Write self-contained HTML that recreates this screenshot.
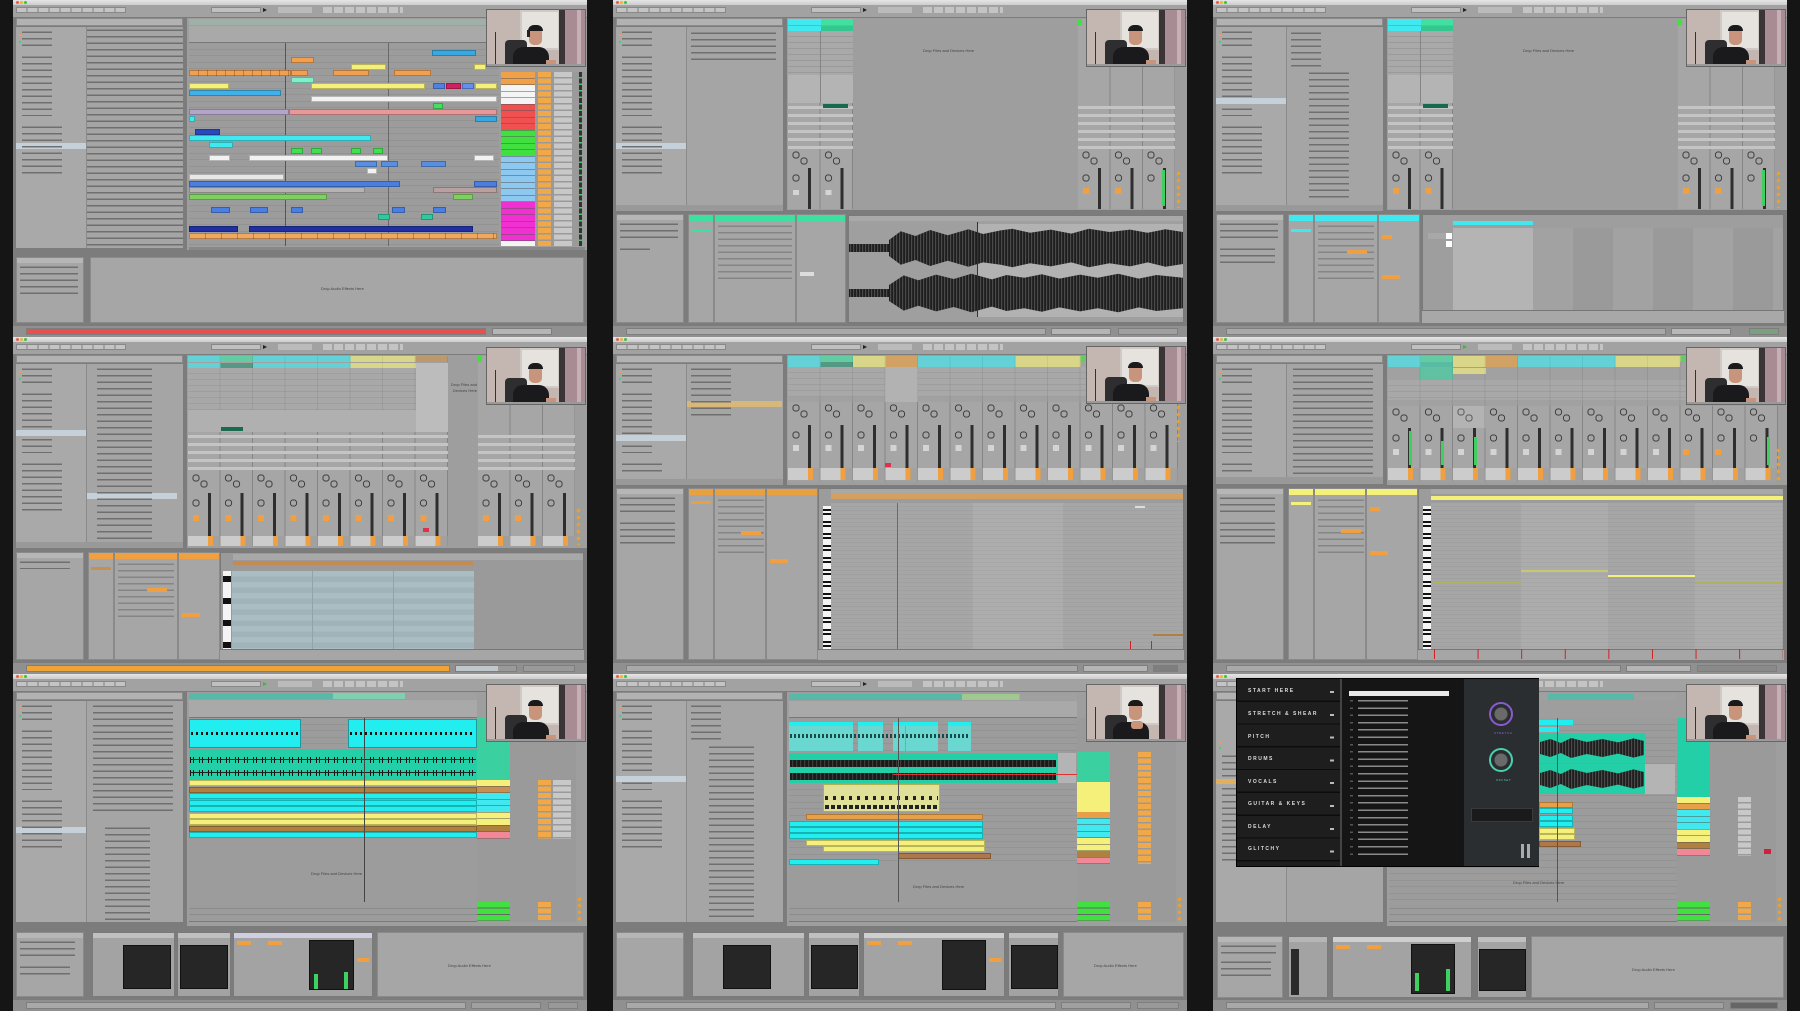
<!DOCTYPE html>
<html><head><meta charset="utf-8">
<style>
body{margin:0;background:#151515;width:1800px;height:1011px;position:relative;overflow:hidden;font-family:"Liberation Sans",sans-serif}
.p{position:absolute;width:574px;height:337px;background:#7c7c7c;overflow:hidden;font-size:4px;color:#333}
.p div{position:absolute;box-sizing:border-box}
.tt{left:0;top:0;width:574px;height:5px;background:linear-gradient(#e6e6e6,#cdcdcd)}
.l1,.l2,.l3{top:1px;width:3px;height:3px;border-radius:50%}
.l1{left:3px;background:#e85a50}.l2{left:7px;background:#e8b830}.l3{left:11px;background:#3fbf3f}
.tool{left:0;top:5px;width:574px;height:12px;background:#a2a2a2}
.tb1{left:3px;top:7px;width:110px;height:6px;background:repeating-linear-gradient(90deg,#c4c4c4 0 9px,#a2a2a2 9px 11px);border:1px solid #888}
.tb2{left:198px;top:7px;width:50px;height:6px;background:#c0c0c0;border:1px solid #888}
.tb3{left:265px;top:7px;width:34px;height:6px;background:#bbb}
.tb4{left:310px;top:7px;width:80px;height:6px;background:repeating-linear-gradient(90deg,#c4c4c4 0 9px,#a2a2a2 9px 11px)}
.play{left:250px;top:8px;width:0;height:0;border-left:4px solid #222;border-top:2.5px solid transparent;border-bottom:2.5px solid transparent}
.srch{left:3px;top:18px;width:167px;height:8px;background:#b2b2b2;border:1px solid #8a8a8a}
.cats{left:3px;top:27px;width:70px;background:#a9a9a9}
.files{left:73px;top:27px;width:97px;background:#a5a5a5;border-left:1px solid #8a8a8a}
.txt{background:repeating-linear-gradient(#0000 0 2.4px,#6f6f6f 2.4px 3.9px,#0000 3.9px 6.5px)}
.sel{background:#c5d0d8}
.od{width:2px;height:2px;background:#f0a040}
.gd{width:2px;height:2px;background:#40d080}
.main{background:#9e9e9e}
.det{background:#a6a6a6;border:1px solid #8a8a8a}
.hd{height:6px}
.stat{left:0;top:326px;width:574px;height:11px;background:#909090}
.sbar{left:13px;top:328px;height:7px;width:460px;background:#a9a9a9;border:1px solid #7e7e7e}
.sbr{left:479px;top:328px;height:7px;width:60px;background:#b5b5b5;border:1px solid #7e7e7e}
.c{height:6px;border:1px solid rgba(0,0,0,.25)}
.cam{width:100px;height:58px;background:#c4b6b0;overflow:hidden;border:1px solid #666}
.lanes{background:repeating-linear-gradient(#9c9c9c 0 6px,#8a8a8a 6px 6.5px)}
.sl{background:repeating-linear-gradient(90deg,#a6a6a6 0 31.5px,#858585 31.5px 32.5px)}
.slots{background:repeating-linear-gradient(#a9a9a9 0 5.5px,#8c8c8c 5.5px 6px)}
.sends{background:radial-gradient(circle at 8px 6px,#0000 2.6px,#444 2.6px 3.6px,#0000 3.8px),radial-gradient(circle at 16px 12px,#0000 2.6px,#444 2.6px 3.6px,#0000 3.8px),linear-gradient(90deg,#a6a6a6 31.5px,#858585 31.5px);background-size:32.5px 100%}
.fad{background:linear-gradient(90deg,#0000 20px,#2e2e2e 20px 23px,#0000 23px),radial-gradient(circle at 8px 10px,#0000 2.6px,#444 2.6px 3.6px,#0000 3.8px),linear-gradient(90deg,#a6a6a6 31.5px,#858585 31.5px);background-size:32.5px 100%}
.nbo{background:linear-gradient(90deg,#0000 5px,#f0a040 5px 11px,#0000 11px);background-size:32.5px 100%}
.nbw{background:linear-gradient(90deg,#0000 5px,#d4d4d4 5px 11px,#0000 11px);background-size:32.5px 100%}
.io{background:repeating-linear-gradient(#0000 0 3px,#c4c4c4 3px 6px,#0000 6px 8px),linear-gradient(90deg,#a6a6a6 31.5px,#858585 31.5px);background-size:32.5px 100%}
.keys{background:repeating-linear-gradient(#f4f4f4 0 3px,#111 3px 5px,#f4f4f4 5px 7px,#111 7px 9px,#f4f4f4 9px 12px)}
.roll{background:repeating-linear-gradient(#a6a6a6 0 3.5px,#9a9a9a 3.5px 4px)}
.scr{background:#262626;border:1px solid #111}
.dev{background:#a3a3a3;border:1px solid #7a7a7a}
.dh{height:5px;background:#b6b6b6}
.wv{background:repeating-linear-gradient(90deg,#1e1e1e 0 1px,#4a4a4a 1px 2px,#262626 2px 3px)}
.teal{background:#22cfa6}
.dk{color:#ddd;font-size:5px;letter-spacing:1.5px;font-weight:bold}
.li{color:#999;font-size:3px;letter-spacing:.5px}
.lbl{font-size:4px;color:#444;white-space:nowrap}
</style></head><body>

<!-- ========== PANEL 1 ========== -->
<div class="p" style="left:13px;top:0">
<div class="tt"></div><div class="l1"></div><div class="l2"></div><div class="l3"></div>
<div class="tool"></div><div class="tb1"></div><div class="tb2"></div><div class="play"></div><div class="tb3"></div><div class="tb4"></div>
<div class="srch"></div>
<div class="cats" style="height:221px"><div class="od" style="left:3px;top:7px"></div><div class="gd" style="left:3px;top:14px"></div>
<div class="txt" style="left:6px;top:2px;width:30px;height:20px"></div><div class="txt" style="left:6px;top:27px;width:30px;height:62px"></div>
<div class="sel" style="left:0;top:116px;width:70px;height:6px"></div><div class="txt" style="left:6px;top:97px;width:40px;height:52px"></div></div>
<div class="files txt" style="height:221px;background-color:#a5a5a5"></div>
<div class="main" style="left:174px;top:18px;width:400px;height:232px"></div>
<div style="left:176px;top:19px;width:310px;height:6px;background:#9fb0a8"></div>
<div style="left:176px;top:26px;width:310px;height:17px;background:#a9a9a9;border-bottom:1px solid #777"></div>
<div class="lanes" style="left:176px;top:43px;width:310px;height:203px"></div>
<div style="left:272px;top:43px;width:1px;height:203px;background:#555"></div>
<div style="left:375px;top:43px;width:1px;height:203px;background:#6a6a6a"></div>
<div class="c" style="left:419px;top:50px;width:44px;background:#3aa8e0"></div>
<div class="c" style="left:278px;top:57px;width:23px;background:#f0a050"></div>
<div class="c" style="left:338px;top:64px;width:35px;background:#f4f07a"></div><div class="c" style="left:461px;top:64px;width:12px;background:#f4f07a"></div>
<div class="c" style="left:176px;top:70px;width:102px;background:repeating-linear-gradient(90deg,#f0a050 0 8px,#c07a3a 8px 9px)"></div><div class="c" style="left:278px;top:70px;width:17px;background:#f0a050"></div><div class="c" style="left:320px;top:70px;width:36px;background:#f0a050"></div><div class="c" style="left:381px;top:70px;width:37px;background:#f0a050"></div>
<div class="c" style="left:278px;top:77px;width:23px;background:#80f0c8"></div>
<div class="c" style="left:176px;top:83px;width:40px;background:#f4f07a"></div><div class="c" style="left:298px;top:83px;width:114px;background:#f4f07a"></div><div class="c" style="left:420px;top:83px;width:12px;background:#5080e0"></div><div class="c" style="left:433px;top:83px;width:15px;background:#d02060"></div><div class="c" style="left:449px;top:83px;width:12px;background:#6090f0"></div><div class="c" style="left:462px;top:83px;width:22px;background:#f4f07a"></div>
<div class="c" style="left:176px;top:90px;width:92px;background:#40b0e8"></div>
<div class="c" style="left:298px;top:96px;width:186px;background:#f2f2f2"></div>
<div class="c" style="left:420px;top:103px;width:10px;background:#40e060"></div>
<div class="c" style="left:176px;top:109px;width:100px;background:#b4a4c8"></div><div class="c" style="left:276px;top:109px;width:208px;background:#e89898"></div>
<div class="c" style="left:176px;top:116px;width:6px;background:#40e8f0"></div><div class="c" style="left:462px;top:116px;width:22px;background:#3aa8e0"></div>
<div class="c" style="left:182px;top:129px;width:25px;background:#2848c0"></div>
<div class="c" style="left:176px;top:135px;width:182px;background:#40e8f0"></div>
<div class="c" style="left:196px;top:142px;width:24px;background:#40e8f0"></div>
<div class="c" style="left:278px;top:148px;width:12px;background:#40e050"></div><div class="c" style="left:298px;top:148px;width:11px;background:#40e050"></div><div class="c" style="left:338px;top:148px;width:10px;background:#40e050"></div><div class="c" style="left:360px;top:148px;width:10px;background:#40e050"></div>
<div class="c" style="left:196px;top:155px;width:21px;background:#f2f2f2"></div><div class="c" style="left:236px;top:155px;width:139px;background:#f2f2f2"></div><div class="c" style="left:461px;top:155px;width:20px;background:#f2f2f2"></div>
<div class="c" style="left:342px;top:161px;width:22px;background:#5a8ee0"></div><div class="c" style="left:368px;top:161px;width:17px;background:#5a8ee0"></div><div class="c" style="left:408px;top:161px;width:25px;background:#5a8ee0"></div>
<div class="c" style="left:354px;top:168px;width:10px;background:#f2f2f2"></div>
<div class="c" style="left:176px;top:174px;width:95px;background:#e8e8e8"></div>
<div class="c" style="left:176px;top:181px;width:211px;background:#4a7ee0"></div><div class="c" style="left:461px;top:181px;width:23px;background:#4a7ee0"></div>
<div class="c" style="left:176px;top:187px;width:176px;background:#b4b4b4"></div><div class="c" style="left:420px;top:187px;width:64px;background:#b8a0a0"></div>
<div class="c" style="left:176px;top:194px;width:138px;background:#7ed060"></div><div class="c" style="left:440px;top:194px;width:20px;background:#7ed060"></div>
<div class="c" style="left:198px;top:207px;width:19px;background:#4a7ee0"></div><div class="c" style="left:237px;top:207px;width:18px;background:#4a7ee0"></div><div class="c" style="left:278px;top:207px;width:12px;background:#4a7ee0"></div><div class="c" style="left:379px;top:207px;width:13px;background:#4a7ee0"></div><div class="c" style="left:420px;top:207px;width:13px;background:#4a7ee0"></div>
<div class="c" style="left:365px;top:214px;width:12px;background:#30c8a0"></div><div class="c" style="left:408px;top:214px;width:12px;background:#30c8a0"></div>
<div class="c" style="left:176px;top:226px;width:49px;background:#2030a0"></div><div class="c" style="left:236px;top:226px;width:224px;background:#2030a0"></div>
<div class="c" style="left:176px;top:233px;width:308px;background:repeating-linear-gradient(90deg,#f0a860 0 15px,#c08048 15px 16px)"></div>
<div style="left:488px;top:72px;width:34px;height:174px;background:linear-gradient(#f0a048 0 13px,#f4f4f4 13px 32.5px,#f05050 32.5px 58.5px,#40e040 58.5px 84.5px,#8cc8f0 84.5px 130px,#f030d0 130px 169px,#f4f4f4 169px);"></div>
<div style="left:488px;top:72px;width:34px;height:174px;background:repeating-linear-gradient(#0000 0 6px,#555 6px 6.5px)"></div>
<div style="left:522px;top:72px;width:50px;height:174px;background:#9a9a9a"></div>
<div style="left:525px;top:72px;width:13px;height:174px;background:repeating-linear-gradient(#f0a848 0 5px,#0000 5px 6.5px)"></div>
<div style="left:541px;top:72px;width:18px;height:174px;background:repeating-linear-gradient(#c8c8c8 0 5px,#0000 5px 6.5px)"></div>
<div style="left:566px;top:72px;width:3px;height:174px;background:repeating-linear-gradient(#333 0 5px,#40d060 5px 6.5px)"></div>
<div style="left:176px;top:247px;width:396px;height:3px;background:#888"></div>
<div class="det" style="left:3px;top:257px;width:68px;height:66px"><div class="dh" style="left:0;top:0;width:66px"></div><div class="txt" style="left:3px;top:6px;width:58px;height:33px"></div></div>
<div class="det" style="left:77px;top:257px;width:494px;height:66px"><div class="lbl" style="left:230px;top:28px">Drop Audio Effects Here</div></div>
<div class="stat"></div><div class="sbar" style="background:#e8504f"></div><div class="sbr"></div>
<div class="cam" style="left:473px;top:9px"><div style="left:33px;top:0;width:40px;height:40px;background:#e6e2de;border:2px solid #d0cac6"></div><div style="left:72px;top:0;width:6px;height:58px;background:#3a3436"></div><div style="left:78px;top:0;width:22px;height:58px;background:#a88c94"></div><div style="left:90px;top:0;width:4px;height:58px;background:#c6b0b6"></div><div style="left:8px;top:22px;width:1px;height:36px;background:#333"></div><div style="left:18px;top:30px;width:22px;height:28px;background:#2e2e30;border-radius:4px 4px 0 0"></div><div style="left:26px;top:37px;width:36px;height:22px;background:#1a1a1c;border-radius:10px 10px 0 0"></div><div style="left:42px;top:17px;width:13px;height:18px;background:#c8957c;border-radius:5px"></div><div style="left:41px;top:15px;width:15px;height:6px;background:#1a1a1a;border-radius:6px 6px 0 0"></div><div style="left:40px;top:20px;width:3px;height:7px;background:#222"></div><div style="left:59px;top:50px;width:10px;height:8px;background:#c8957c"></div><div style="left:0;top:54px;width:100px;height:4px;background:#9a9a9a"></div></div>
</div>

<!-- ========== PANEL 2 ========== -->
<div class="p" style="left:613px;top:0">
<div class="tt"></div><div class="l1"></div><div class="l2"></div><div class="l3"></div>
<div class="tool"></div><div class="tb1"></div><div class="tb2"></div><div class="play"></div><div class="tb3"></div><div class="tb4"></div>
<div class="srch"></div>
<div class="cats" style="height:178px"><div class="od" style="left:3px;top:7px"></div><div class="gd" style="left:3px;top:14px"></div>
<div class="txt" style="left:6px;top:2px;width:30px;height:20px"></div><div class="txt" style="left:6px;top:27px;width:30px;height:62px"></div>
<div class="sel" style="left:0;top:116px;width:70px;height:6px"></div><div class="txt" style="left:6px;top:97px;width:40px;height:52px"></div></div>
<div class="files" style="height:178px"><div class="txt" style="left:4px;top:3px;width:85px;height:32px"></div></div>
<div style="left:3px;top:205px;width:167px;height:6px;background:#999"></div>
<div class="main" style="left:174px;top:18px;width:400px;height:192px"></div>
<div style="left:175px;top:19px;width:33px;height:6px;background:#40e8f0"></div><div style="left:208px;top:19px;width:32px;height:6px;background:#40e0a0"></div>
<div style="left:175px;top:26px;width:33px;height:5px;background:#40e8f0"></div><div style="left:208px;top:26px;width:32px;height:5px;background:#34c890"></div>
<div class="slots" style="left:175px;top:31px;width:65px;height:44px"></div>
<div style="left:175px;top:75px;width:65px;height:28px;background:#b4b4b4"></div>
<div style="left:207px;top:31px;width:1px;height:178px;background:#858585"></div>
<div class="io" style="left:175px;top:103px;width:65px;height:46px"></div>
<div style="left:210px;top:104px;width:25px;height:4px;background:#176a50"></div>
<div class="sends" style="left:175px;top:149px;width:65px;height:19px"></div>
<div class="fad" style="left:175px;top:168px;width:65px;height:41px"></div>
<div class="nbw" style="left:175px;top:190px;width:65px;height:5px"></div>
<div class="lbl" style="left:310px;top:48px">Drop Files and Devices Here</div>
<div class="sl" style="left:465px;top:19px;width:97px;height:84px;background-color:#9e9e9e"></div>
<div style="left:465px;top:19px;width:4px;height:6px;background:#40e040"></div>
<div class="io" style="left:465px;top:103px;width:97px;height:46px"></div>
<div class="sends" style="left:465px;top:149px;width:97px;height:19px"></div>
<div class="fad" style="left:465px;top:168px;width:97px;height:41px"></div>
<div style="left:470px;top:188px;width:6px;height:6px;background:#f0a040"></div><div style="left:502px;top:188px;width:6px;height:6px;background:#f0a040"></div>
<div style="left:549px;top:170px;width:3px;height:36px;background:#40d060"></div>
<div style="left:563px;top:170px;width:5px;height:38px;background:radial-gradient(circle,#e8a030 1.6px,#0000 2px) 0 0/5px 7px"></div>
<div class="det" style="left:3px;top:214px;width:68px;height:109px"><div class="dh" style="left:0;top:0;width:66px"></div><div class="txt" style="left:3px;top:6px;width:58px;height:20px"></div><div class="txt" style="left:3px;top:31px;width:30px;height:4px"></div></div>
<div class="det" style="left:75px;top:214px;width:26px;height:109px"><div class="hd" style="left:0;top:0;width:24px;background:#3ce0a0"></div><div style="left:2px;top:14px;width:20px;height:3px;background:#3ce0a0"></div></div>
<div class="det" style="left:101px;top:214px;width:82px;height:109px"><div class="hd" style="left:0;top:0;width:80px;background:#3ce0a0"></div><div class="txt" style="left:3px;top:8px;width:74px;height:60px;opacity:.6"></div></div>
<div class="det" style="left:183px;top:214px;width:50px;height:109px"><div class="hd" style="left:0;top:0;width:48px;background:#3ce0a0"></div><div style="left:3px;top:57px;width:14px;height:4px;background:#ddd"></div></div>
<div style="left:235px;top:215px;width:336px;height:108px;background:#9f9f9f;border:1px solid #7a7a7a"></div>
<div style="left:364px;top:224px;width:206px;height:93px;background:#b2b2b2"></div>
<div style="left:236px;top:216px;width:334px;height:5px;background:#a9a9a9"></div>
<div class="wv" style="left:236px;top:244px;width:40px;height:8px"></div>
<div class="wv" style="left:276px;top:228px;width:294px;height:40px;clip-path:polygon(0 30%,4% 8%,9% 20%,14% 5%,20% 18%,27% 3%,32% 15%,38% 6%,42% 2%,48% 12%,55% 4%,62% 14%,68% 2%,75% 10%,82% 4%,88% 12%,94% 3%,100% 10%,100% 90%,94% 97%,88% 86%,82% 96%,75% 88%,68% 98%,62% 86%,55% 96%,48% 88%,42% 98%,38% 92%,32% 86%,27% 97%,20% 82%,14% 95%,9% 80%,4% 92%,0 70%)"></div>
<div class="wv" style="left:236px;top:289px;width:40px;height:8px"></div>
<div class="wv" style="left:276px;top:273px;width:294px;height:40px;clip-path:polygon(0 30%,5% 6%,10% 18%,16% 4%,22% 15%,28% 2%,35% 16%,40% 5%,46% 12%,52% 3%,58% 14%,65% 4%,71% 12%,78% 2%,85% 14%,91% 5%,100% 12%,100% 88%,91% 95%,85% 86%,78% 98%,71% 88%,65% 96%,58% 86%,52% 97%,46% 88%,40% 95%,35% 84%,28% 98%,22% 85%,16% 96%,10% 82%,5% 94%,0 70%)"></div>
<div style="left:364px;top:222px;width:1px;height:95px;background:#333"></div>
<div class="stat"></div><div class="sbar" style="width:420px"></div><div class="sbr" style="left:438px"></div><div class="sbr" style="left:505px;width:60px;background:#a0a0a0"></div>
<div class="cam" style="left:473px;top:9px"><div style="left:33px;top:0;width:40px;height:40px;background:#e6e2de;border:2px solid #d0cac6"></div><div style="left:72px;top:0;width:6px;height:58px;background:#3a3436"></div><div style="left:78px;top:0;width:22px;height:58px;background:#a88c94"></div><div style="left:90px;top:0;width:4px;height:58px;background:#c6b0b6"></div><div style="left:8px;top:22px;width:1px;height:36px;background:#333"></div><div style="left:18px;top:30px;width:22px;height:28px;background:#2e2e30;border-radius:4px 4px 0 0"></div><div style="left:26px;top:37px;width:36px;height:22px;background:#1a1a1c;border-radius:10px 10px 0 0"></div><div style="left:42px;top:17px;width:13px;height:18px;background:#c8957c;border-radius:5px"></div><div style="left:41px;top:15px;width:15px;height:6px;background:#1a1a1a;border-radius:6px 6px 0 0"></div><div style="left:59px;top:50px;width:10px;height:8px;background:#c8957c"></div><div style="left:0;top:54px;width:100px;height:4px;background:#9a9a9a"></div></div>
</div>

<!-- ========== PANEL 3 ========== -->
<div class="p" style="left:1213px;top:0">
<div class="tt"></div><div class="l1"></div><div class="l2"></div><div class="l3"></div>
<div class="tool"></div><div class="tb1"></div><div class="tb2"></div><div class="play"></div><div class="tb3"></div><div class="tb4"></div>
<div class="srch"></div>
<div class="cats" style="height:178px"><div class="od" style="left:3px;top:7px"></div><div class="gd" style="left:3px;top:14px"></div>
<div class="txt" style="left:6px;top:2px;width:30px;height:20px"></div><div class="txt" style="left:6px;top:27px;width:30px;height:62px"></div>
<div class="sel" style="left:0;top:71px;width:70px;height:6px"></div><div class="txt" style="left:6px;top:97px;width:40px;height:52px"></div></div>
<div class="files" style="height:178px"><div class="txt" style="left:4px;top:3px;width:30px;height:40px"></div><div class="txt" style="left:22px;top:43px;width:40px;height:132px"></div></div>
<div style="left:3px;top:205px;width:167px;height:6px;background:#999"></div>
<div class="main" style="left:174px;top:18px;width:400px;height:192px"></div>
<div style="left:175px;top:19px;width:33px;height:6px;background:#40e8f0"></div><div style="left:208px;top:19px;width:32px;height:6px;background:#40e0a0"></div>
<div style="left:175px;top:26px;width:33px;height:5px;background:#40e8f0"></div><div style="left:208px;top:26px;width:32px;height:5px;background:#34c890"></div>
<div class="slots" style="left:175px;top:31px;width:65px;height:44px"></div>
<div style="left:175px;top:75px;width:65px;height:28px;background:#b4b4b4"></div>
<div style="left:207px;top:31px;width:1px;height:178px;background:#858585"></div>
<div class="io" style="left:175px;top:103px;width:65px;height:46px"></div>
<div style="left:210px;top:104px;width:25px;height:4px;background:#176a50"></div>
<div class="sends" style="left:175px;top:149px;width:65px;height:19px"></div>
<div class="fad" style="left:175px;top:168px;width:65px;height:41px"></div>
<div class="nbo" style="left:175px;top:188px;width:65px;height:6px"></div>
<div class="lbl" style="left:310px;top:48px">Drop Files and Devices Here</div>
<div class="sl" style="left:465px;top:19px;width:97px;height:84px;background-color:#9e9e9e"></div>
<div style="left:465px;top:19px;width:4px;height:6px;background:#40e040"></div>
<div class="io" style="left:465px;top:103px;width:97px;height:46px"></div>
<div class="sends" style="left:465px;top:149px;width:97px;height:19px"></div>
<div class="fad" style="left:465px;top:168px;width:97px;height:41px"></div>
<div style="left:470px;top:188px;width:6px;height:6px;background:#f0a040"></div><div style="left:502px;top:188px;width:6px;height:6px;background:#f0a040"></div>
<div style="left:549px;top:170px;width:3px;height:36px;background:#40d060"></div>
<div style="left:563px;top:170px;width:5px;height:38px;background:radial-gradient(circle,#e8a030 1.6px,#0000 2px) 0 0/5px 7px"></div>
<div class="det" style="left:3px;top:214px;width:68px;height:109px"><div class="dh" style="left:0;top:0;width:66px"></div><div class="txt" style="left:3px;top:6px;width:58px;height:20px"></div><div class="txt" style="left:3px;top:31px;width:55px;height:20px"></div></div>
<div class="det" style="left:75px;top:214px;width:26px;height:109px"><div class="hd" style="left:0;top:0;width:24px;background:#40e8f0"></div><div style="left:2px;top:14px;width:20px;height:3px;background:#40e8f0"></div></div>
<div class="det" style="left:101px;top:214px;width:64px;height:109px"><div class="hd" style="left:0;top:0;width:62px;background:#40e8f0"></div><div class="txt" style="left:3px;top:8px;width:56px;height:60px;opacity:.6"></div><div style="left:32px;top:35px;width:20px;height:4px;background:#f0a040"></div></div>
<div class="det" style="left:165px;top:214px;width:42px;height:109px"><div class="hd" style="left:0;top:0;width:40px;background:#40e8f0"></div><div style="left:3px;top:20px;width:10px;height:4px;background:#f0a040"></div><div style="left:3px;top:60px;width:18px;height:4px;background:#f0a040"></div></div>
<div style="left:209px;top:214px;width:362px;height:109px;background:#9e9e9e;border:1px solid #7a7a7a"></div>
<div style="left:240px;top:228px;width:80px;height:82px;background:#b4b4b4"></div>
<div style="left:320px;top:228px;width:250px;height:82px;background:repeating-linear-gradient(90deg,#a2a2a2 0 40px,#9a9a9a 40px 80px)"></div>
<div style="left:240px;top:221px;width:80px;height:4px;background:#40e8f0"></div>
<div style="left:215px;top:233px;width:23px;height:6px;background:#a8a8a8"></div><div style="left:233px;top:233px;width:6px;height:6px;background:#fff"></div>
<div style="left:233px;top:241px;width:6px;height:6px;background:#fff"></div>
<div style="left:209px;top:310px;width:362px;height:13px;background:#a8a8a8;border-top:1px solid #777"></div>
<div class="stat"></div><div class="sbar" style="width:440px"></div><div class="sbr" style="left:458px;width:60px;background:#b8b8b8"></div><div class="sbr" style="left:536px;width:30px;background:#7aa080"></div>
<div class="cam" style="left:473px;top:9px"><div style="left:33px;top:0;width:40px;height:40px;background:#e6e2de;border:2px solid #d0cac6"></div><div style="left:72px;top:0;width:6px;height:58px;background:#3a3436"></div><div style="left:78px;top:0;width:22px;height:58px;background:#a88c94"></div><div style="left:90px;top:0;width:4px;height:58px;background:#c6b0b6"></div><div style="left:8px;top:22px;width:1px;height:36px;background:#333"></div><div style="left:18px;top:30px;width:22px;height:28px;background:#2e2e30;border-radius:4px 4px 0 0"></div><div style="left:26px;top:37px;width:36px;height:22px;background:#1a1a1c;border-radius:10px 10px 0 0"></div><div style="left:42px;top:17px;width:13px;height:18px;background:#c8957c;border-radius:5px"></div><div style="left:41px;top:15px;width:15px;height:6px;background:#1a1a1a;border-radius:6px 6px 0 0"></div><div style="left:59px;top:50px;width:10px;height:8px;background:#c8957c"></div><div style="left:0;top:54px;width:100px;height:4px;background:#9a9a9a"></div></div>
</div>

<!-- ========== PANEL 4 ========== -->
<div class="p" style="left:13px;top:337px">
<div class="tt"></div><div class="l1"></div><div class="l2"></div><div class="l3"></div>
<div class="tool"></div><div class="tb1"></div><div class="tb2"></div><div class="play"></div><div class="tb3"></div><div class="tb4"></div>
<div class="srch"></div>
<div class="cats" style="height:178px"><div class="od" style="left:3px;top:7px"></div><div class="gd" style="left:3px;top:14px"></div>
<div class="txt" style="left:6px;top:2px;width:30px;height:20px"></div><div class="txt" style="left:6px;top:27px;width:30px;height:62px"></div>
<div class="sel" style="left:0;top:66px;width:70px;height:6px"></div><div class="txt" style="left:6px;top:97px;width:40px;height:52px"></div></div>
<div class="files" style="height:178px"><div class="sel" style="left:0;top:129px;width:90px;height:6px"></div><div class="txt" style="left:10px;top:2px;width:55px;height:174px"></div></div>
<div style="left:3px;top:205px;width:167px;height:6px;background:#999"></div>
<div class="main" style="left:174px;top:18px;width:400px;height:193px"></div>
<div style="left:175px;top:19px;width:260px;height:6px;background:linear-gradient(90deg,#40e8f0 0 32.5px,#40e0a0 32.5px 65px,#40e8f0 65px 162.5px,#f4f07a 162.5px 227.5px,#c8904a 227.5px)"></div>
<div style="left:175px;top:26px;width:228px;height:5px;background:linear-gradient(90deg,#40e8f0 0 32.5px,#2a9070 32.5px 65px,#40e8f0 65px 162.5px,#f4f07a 162.5px)"></div>
<div class="slots" style="left:175px;top:31px;width:260px;height:42px"></div>
<div class="sl" style="left:175px;top:19px;width:260px;height:190px;opacity:.35"></div>
<div style="left:175px;top:73px;width:260px;height:22px;background:#b0b0b0"></div>
<div style="left:403px;top:26px;width:32px;height:70px;background:#bcbcbc"></div>
<div class="io" style="left:175px;top:95px;width:260px;height:40px"></div>
<div style="left:208px;top:90px;width:22px;height:4px;background:#1a6a50"></div>
<div class="sends" style="left:175px;top:135px;width:260px;height:21px"></div>
<div class="fad" style="left:175px;top:156px;width:260px;height:43px"></div>
<div class="nbo" style="left:175px;top:178px;width:260px;height:6px"></div>
<div style="left:410px;top:191px;width:6px;height:4px;background:#e03050"></div>
<div style="left:175px;top:199px;width:260px;height:10px;background:repeating-linear-gradient(90deg,#ccc 0 20px,#f0a040 20px 25px,#0000 25px 32.5px)"></div>
<div class="lbl" style="left:438px;top:45px">Drop Files and</div><div class="lbl" style="left:440px;top:51px">Devices Here</div>
<div class="sl" style="left:465px;top:19px;width:97px;height:76px;background-color:#9e9e9e"></div>
<div style="left:465px;top:19px;width:4px;height:6px;background:#40e040"></div>
<div class="io" style="left:465px;top:95px;width:97px;height:40px"></div>
<div class="sends" style="left:465px;top:135px;width:97px;height:21px"></div>
<div class="fad" style="left:465px;top:156px;width:97px;height:43px"></div>
<div style="left:470px;top:178px;width:6px;height:6px;background:#f0a040"></div><div style="left:502px;top:178px;width:6px;height:6px;background:#f0a040"></div>
<div style="left:465px;top:199px;width:97px;height:10px;background:repeating-linear-gradient(90deg,#ccc 0 20px,#f0a040 20px 25px,#0000 25px 32.5px)"></div>
<div style="left:563px;top:170px;width:5px;height:38px;background:radial-gradient(circle,#e8a030 1.6px,#0000 2px) 0 0/5px 7px"></div>
<div class="det" style="left:3px;top:215px;width:68px;height:108px"><div class="dh" style="left:0;top:0;width:66px"></div><div class="txt" style="left:3px;top:6px;width:50px;height:10px"></div></div>
<div class="det" style="left:75px;top:215px;width:26px;height:108px"><div class="hd" style="left:0;top:0;width:24px;background:#f0a040"></div><div style="left:2px;top:14px;width:20px;height:3px;background:#c8904a"></div></div>
<div class="det" style="left:101px;top:215px;width:64px;height:108px"><div class="hd" style="left:0;top:0;width:62px;background:#f0a040"></div><div class="txt" style="left:3px;top:8px;width:56px;height:60px;opacity:.6"></div><div style="left:32px;top:35px;width:20px;height:4px;background:#f0a040"></div></div>
<div class="det" style="left:165px;top:215px;width:42px;height:108px"><div class="hd" style="left:0;top:0;width:40px;background:#f0a040"></div><div style="left:3px;top:60px;width:18px;height:4px;background:#f0a040"></div></div>
<div style="left:207px;top:215px;width:364px;height:108px;background:#9a9a9a;border:1px solid #7a7a7a"></div>
<div style="left:220px;top:217px;width:350px;height:6px;background:#a8a8a8"></div>
<div style="left:220px;top:224px;width:240px;height:4px;background:#c48a50"></div>
<div style="left:219px;top:234px;width:242px;height:78px;background:repeating-linear-gradient(#a9bdc3 0 5.5px,#9fb3b9 5.5px 11px)"></div>
<div style="left:299px;top:234px;width:1px;height:78px;background:#90a4aa"></div><div style="left:380px;top:234px;width:1px;height:78px;background:#90a4aa"></div>
<div class="keys" style="left:210px;top:234px;width:8px;height:78px;background:repeating-linear-gradient(#f4f4f4 0 5px,#111 5px 11px,#f4f4f4 11px 16px,#f4f4f4 16px 22px)"></div>
<div style="left:207px;top:312px;width:364px;height:11px;background:#a6a6a6;border-top:1px solid #777"></div>
<div class="stat"></div><div class="sbar" style="width:424px;background:#f0a438"></div><div class="sbr" style="left:442px;width:62px;background:linear-gradient(90deg,#c0c8cc 70%,#9a9a9a 70%)"></div><div class="sbr" style="left:510px;width:52px;background:#9a9a9a"></div>
<div class="cam" style="left:473px;top:10px"><div style="left:33px;top:0;width:40px;height:40px;background:#e6e2de;border:2px solid #d0cac6"></div><div style="left:72px;top:0;width:6px;height:58px;background:#3a3436"></div><div style="left:78px;top:0;width:22px;height:58px;background:#a88c94"></div><div style="left:90px;top:0;width:4px;height:58px;background:#c6b0b6"></div><div style="left:8px;top:22px;width:1px;height:36px;background:#333"></div><div style="left:18px;top:30px;width:22px;height:28px;background:#2e2e30;border-radius:4px 4px 0 0"></div><div style="left:26px;top:37px;width:36px;height:22px;background:#1a1a1c;border-radius:10px 10px 0 0"></div><div style="left:42px;top:17px;width:13px;height:18px;background:#c8957c;border-radius:5px"></div><div style="left:41px;top:15px;width:15px;height:6px;background:#1a1a1a;border-radius:6px 6px 0 0"></div><div style="left:59px;top:50px;width:10px;height:8px;background:#c8957c"></div><div style="left:0;top:54px;width:100px;height:4px;background:#9a9a9a"></div></div>
</div>

<!-- ========== PANEL 5 ========== -->
<div class="p" style="left:613px;top:337px">
<div class="tt"></div><div class="l1"></div><div class="l2"></div><div class="l3"></div>
<div class="tool"></div><div class="tb1"></div><div class="tb2"></div><div class="play"></div><div class="tb3"></div><div class="tb4"></div>
<div class="srch"></div>
<div class="cats" style="height:115px"><div class="od" style="left:3px;top:7px"></div><div class="gd" style="left:3px;top:14px"></div>
<div class="txt" style="left:6px;top:2px;width:30px;height:20px"></div><div class="txt" style="left:6px;top:27px;width:30px;height:62px"></div>
<div class="sel" style="left:0;top:71px;width:70px;height:6px"></div><div class="txt" style="left:6px;top:97px;width:40px;height:14px"></div></div>
<div class="files" style="height:115px"><div class="sel" style="left:0;top:37px;width:95px;height:6px;background:#d8b878"></div><div class="txt" style="left:4px;top:2px;width:40px;height:52px"></div></div>
<div style="left:3px;top:142px;width:167px;height:6px;background:#999"></div>
<div class="main" style="left:174px;top:18px;width:400px;height:130px"></div>
<div style="left:175px;top:19px;width:390px;height:6px;background:linear-gradient(90deg,#40e8f0 0 32.5px,#40e0a0 32.5px 65px,#f4f07a 65px 97.5px,#e8a040 97.5px 130px,#40e8f0 130px 227.5px,#f4f07a 227.5px 292.5px,#40e040 292.5px)"></div>
<div style="left:175px;top:25px;width:390px;height:5px;background:linear-gradient(90deg,#40e8f0 0 32.5px,#2a9070 32.5px 65px,#f4f07a 65px 97.5px,#e8a040 97.5px 130px,#40e8f0 130px 227.5px,#f4f07a 227.5px 292.5px,#a0a0a0 292.5px)"></div>
<div class="slots" style="left:175px;top:30px;width:390px;height:30px"></div>
<div style="left:272px;top:30px;width:33px;height:35px;background:#b8b8b8"></div>
<div class="sl" style="left:175px;top:19px;width:390px;height:126px;opacity:.35"></div>
<div class="sends" style="left:175px;top:65px;width:390px;height:23px"></div>
<div class="fad" style="left:175px;top:88px;width:390px;height:43px"></div>
<div class="nbw" style="left:175px;top:108px;width:390px;height:6px"></div>
<div style="left:272px;top:126px;width:6px;height:4px;background:#e03050"></div>
<div style="left:175px;top:131px;width:390px;height:12px;background:repeating-linear-gradient(90deg,#ccc 0 20px,#f0a040 20px 25px,#0000 25px 32.5px)"></div>
<div style="left:563px;top:60px;width:5px;height:45px;background:radial-gradient(circle,#e8a030 1.6px,#0000 2px) 0 0/5px 7px"></div>
<div class="det" style="left:3px;top:151px;width:68px;height:172px"><div class="dh" style="left:0;top:0;width:66px"></div><div class="txt" style="left:3px;top:6px;width:55px;height:20px"></div><div class="txt" style="left:3px;top:31px;width:55px;height:27px"></div></div>
<div class="det" style="left:75px;top:151px;width:26px;height:172px"><div class="hd" style="left:0;top:0;width:24px;background:#e8a040"></div><div style="left:2px;top:12px;width:20px;height:3px;background:#e8a040"></div></div>
<div class="det" style="left:101px;top:151px;width:52px;height:172px"><div class="hd" style="left:0;top:0;width:50px;background:#e8a040"></div><div class="txt" style="left:3px;top:8px;width:46px;height:60px;opacity:.6"></div><div style="left:26px;top:42px;width:20px;height:4px;background:#f0a040"></div></div>
<div class="det" style="left:153px;top:151px;width:52px;height:172px"><div class="hd" style="left:0;top:0;width:50px;background:#e8a040"></div><div style="left:3px;top:70px;width:18px;height:4px;background:#f0a040"></div></div>
<div style="left:205px;top:151px;width:366px;height:172px;background:#9c9c9c;border:1px solid #7a7a7a"></div>
<div style="left:218px;top:152px;width:352px;height:5px;background:#a8a8a8"></div>
<div style="left:218px;top:157px;width:352px;height:5px;background:#d4a060"></div>
<div class="roll" style="left:218px;top:166px;width:352px;height:146px"></div>
<div style="left:284px;top:166px;width:1px;height:146px;background:#6a6a6a"></div>
<div style="left:360px;top:166px;width:90px;height:146px;background:rgba(255,255,255,.08)"></div>
<div class="keys" style="left:210px;top:169px;width:8px;height:143px"></div>
<div style="left:522px;top:169px;width:10px;height:2px;background:#ddd"></div>
<div style="left:540px;top:297px;width:30px;height:2px;background:#b08040"></div>
<div style="left:205px;top:312px;width:366px;height:11px;background:#a6a6a6;border-top:1px solid #777"></div>
<div style="left:517px;top:304px;width:1px;height:8px;background:#d02020"></div><div style="left:538px;top:304px;width:1px;height:8px;background:#d02020"></div>
<div class="stat"></div><div class="sbar" style="width:452px"></div><div class="sbr" style="left:470px;width:65px"></div><div class="sbr" style="left:540px;width:25px;background:#7e7e7e"></div>
<div class="cam" style="left:473px;top:9px"><div style="left:33px;top:0;width:40px;height:40px;background:#e6e2de;border:2px solid #d0cac6"></div><div style="left:72px;top:0;width:6px;height:58px;background:#3a3436"></div><div style="left:78px;top:0;width:22px;height:58px;background:#a88c94"></div><div style="left:90px;top:0;width:4px;height:58px;background:#c6b0b6"></div><div style="left:8px;top:22px;width:1px;height:36px;background:#333"></div><div style="left:18px;top:30px;width:22px;height:28px;background:#2e2e30;border-radius:4px 4px 0 0"></div><div style="left:26px;top:37px;width:36px;height:22px;background:#1a1a1c;border-radius:10px 10px 0 0"></div><div style="left:42px;top:17px;width:13px;height:18px;background:#c8957c;border-radius:5px"></div><div style="left:41px;top:15px;width:15px;height:6px;background:#1a1a1a;border-radius:6px 6px 0 0"></div><div style="left:59px;top:50px;width:10px;height:8px;background:#c8957c"></div><div style="left:0;top:54px;width:100px;height:4px;background:#9a9a9a"></div></div>
</div>

<!-- ========== PANEL 6 ========== -->
<div class="p" style="left:1213px;top:337px">
<div class="tt"></div><div class="l1"></div><div class="l2"></div><div class="l3"></div>
<div class="tool"></div><div class="tb1"></div><div class="tb2"></div><div class="play" style="border-left-color:#30c030"></div><div class="tb3"></div><div class="tb4"></div>
<div class="srch"></div>
<div class="cats" style="height:113px"><div class="od" style="left:3px;top:7px"></div><div class="gd" style="left:3px;top:14px"></div>
<div class="txt" style="left:6px;top:2px;width:30px;height:20px"></div><div class="txt" style="left:6px;top:27px;width:30px;height:62px"></div><div class="txt" style="left:6px;top:97px;width:30px;height:14px"></div></div>
<div class="files" style="height:113px"><div class="txt" style="left:6px;top:2px;width:80px;height:110px"></div></div>
<div style="left:3px;top:140px;width:167px;height:7px;background:#999"></div>
<div class="main" style="left:174px;top:18px;width:400px;height:130px"></div>
<div style="left:175px;top:19px;width:390px;height:6px;background:linear-gradient(90deg,#40e8f0 0 32.5px,#40e0a0 32.5px 65px,#f4f07a 65px 97.5px,#e8a040 97.5px 130px,#40e8f0 130px 227.5px,#f4f07a 227.5px 292.5px,#40e040 292.5px)"></div>
<div style="left:175px;top:25px;width:292px;height:5px;background:linear-gradient(90deg,#40e8f0 0 32.5px,#2fc8a0 32.5px 65px,#f4f07a 65px 97.5px,#e8a040 97.5px 130px,#40e8f0 130px 227.5px,#f4f07a 227.5px)"></div>
<div style="left:207px;top:31px;width:33px;height:12px;background:#3ad0a0"></div>
<div style="left:240px;top:31px;width:33px;height:6px;background:#f4f07a"></div>
<div class="slots" style="left:175px;top:43px;width:390px;height:20px"></div>
<div class="sl" style="left:175px;top:19px;width:390px;height:126px;opacity:.35"></div>
<div class="sends" style="left:175px;top:69px;width:390px;height:22px"></div>
<div style="left:240px;top:69px;width:33px;height:62px;background:rgba(255,255,255,.15)"></div>
<div class="fad" style="left:175px;top:91px;width:390px;height:40px"></div>
<div style="left:196px;top:94px;width:3px;height:34px;background:#40d060"></div><div style="left:228px;top:104px;width:3px;height:24px;background:#40d060"></div><div style="left:261px;top:100px;width:3px;height:28px;background:#40d060"></div><div style="left:554px;top:100px;width:3px;height:28px;background:#40d060"></div>
<div class="nbw" style="left:175px;top:112px;width:292px;height:6px"></div>
<div style="left:470px;top:112px;width:6px;height:6px;background:#f0a040"></div><div style="left:502px;top:112px;width:6px;height:6px;background:#f0a040"></div>
<div style="left:175px;top:131px;width:390px;height:12px;background:repeating-linear-gradient(90deg,#ccc 0 20px,#f0a040 20px 25px,#0000 25px 32.5px)"></div>
<div style="left:563px;top:110px;width:5px;height:36px;background:radial-gradient(circle,#e8a030 1.6px,#0000 2px) 0 0/5px 7px"></div>
<div class="det" style="left:3px;top:151px;width:68px;height:172px"><div class="dh" style="left:0;top:0;width:66px"></div><div class="txt" style="left:3px;top:6px;width:55px;height:20px"></div><div class="txt" style="left:3px;top:31px;width:55px;height:27px"></div></div>
<div class="det" style="left:75px;top:151px;width:26px;height:172px"><div class="hd" style="left:0;top:0;width:24px;background:#f4f07a"></div><div style="left:2px;top:13px;width:20px;height:3px;background:#f4f07a"></div></div>
<div class="det" style="left:101px;top:151px;width:52px;height:172px"><div class="hd" style="left:0;top:0;width:50px;background:#f4f07a"></div><div class="txt" style="left:3px;top:8px;width:46px;height:60px;opacity:.6"></div><div style="left:26px;top:40px;width:20px;height:4px;background:#f0a040"></div></div>
<div class="det" style="left:153px;top:151px;width:52px;height:172px"><div class="hd" style="left:0;top:0;width:50px;background:#f4f07a"></div><div style="left:3px;top:18px;width:10px;height:4px;background:#f0a040"></div><div style="left:3px;top:62px;width:18px;height:4px;background:#f0a040"></div></div>
<div style="left:205px;top:151px;width:366px;height:172px;background:#9c9c9c;border:1px solid #7a7a7a"></div>
<div style="left:218px;top:152px;width:352px;height:5px;background:#a8a8a8"></div>
<div style="left:218px;top:159px;width:352px;height:4px;background:#f4f07a"></div>
<div class="roll" style="left:218px;top:166px;width:352px;height:146px"></div>
<div style="left:308px;top:166px;width:87px;height:146px;background:rgba(255,255,255,.07)"></div><div style="left:482px;top:166px;width:87px;height:146px;background:rgba(255,255,255,.07)"></div>
<div class="keys" style="left:210px;top:169px;width:8px;height:143px"></div>
<div style="left:308px;top:233px;width:87px;height:2px;background:#c8c870"></div>
<div style="left:395px;top:238px;width:87px;height:2px;background:#f4f07a"></div>
<div style="left:220px;top:245px;width:88px;height:2px;background:#b0b060"></div>
<div style="left:482px;top:245px;width:88px;height:2px;background:#b0b060"></div>
<div style="left:205px;top:312px;width:366px;height:11px;background:#a6a6a6;border-top:1px solid #777"></div>
<div style="left:220px;top:312px;width:350px;height:10px;background:linear-gradient(90deg,#0000 0 1px,#d02020 1px 2px,#0000 2px) 0 0/43.6px 100%"></div>
<div class="stat"></div><div class="sbar" style="width:395px"></div><div class="sbr" style="left:413px;width:65px"></div><div class="sbr" style="left:484px;width:80px;background:#8a8a8a"></div>
<div class="cam" style="left:473px;top:10px"><div style="left:33px;top:0;width:40px;height:40px;background:#e6e2de;border:2px solid #d0cac6"></div><div style="left:72px;top:0;width:6px;height:58px;background:#3a3436"></div><div style="left:78px;top:0;width:22px;height:58px;background:#a88c94"></div><div style="left:90px;top:0;width:4px;height:58px;background:#c6b0b6"></div><div style="left:8px;top:22px;width:1px;height:36px;background:#333"></div><div style="left:18px;top:30px;width:22px;height:28px;background:#2e2e30;border-radius:4px 4px 0 0"></div><div style="left:26px;top:37px;width:36px;height:22px;background:#1a1a1c;border-radius:10px 10px 0 0"></div><div style="left:42px;top:17px;width:13px;height:18px;background:#c8957c;border-radius:5px"></div><div style="left:41px;top:15px;width:15px;height:6px;background:#1a1a1a;border-radius:6px 6px 0 0"></div><div style="left:59px;top:50px;width:10px;height:8px;background:#c8957c"></div><div style="left:0;top:54px;width:100px;height:4px;background:#9a9a9a"></div></div>
</div>

<!-- ========== PANEL 7 ========== -->
<div class="p" style="left:13px;top:674px">
<div class="tt"></div><div class="l1"></div><div class="l2"></div><div class="l3"></div>
<div class="tool"></div><div class="tb1"></div><div class="tb2"></div><div class="play" style="border-left-color:#30c030"></div><div class="tb3"></div><div class="tb4"></div>
<div class="srch"></div>
<div class="cats" style="height:221px"><div class="od" style="left:3px;top:7px"></div><div class="gd" style="left:3px;top:14px"></div>
<div class="txt" style="left:6px;top:2px;width:30px;height:20px"></div><div class="txt" style="left:6px;top:27px;width:30px;height:62px"></div>
<div class="sel" style="left:0;top:126px;width:70px;height:6px"></div><div class="txt" style="left:6px;top:97px;width:40px;height:52px"></div></div>
<div class="files" style="height:221px"><div class="txt" style="left:6px;top:2px;width:80px;height:110px"></div><div class="txt" style="left:18px;top:124px;width:45px;height:96px"></div></div>
<div class="main" style="left:174px;top:18px;width:400px;height:234px"></div>
<div style="left:176px;top:19px;width:288px;height:6px;background:linear-gradient(90deg,#5ab8a8 0 50%,#7ed0b0 50% 75%,#a0a0a0 75%)"></div>
<div style="left:176px;top:26px;width:288px;height:18px;background:#a9a9a9;border-bottom:1px solid #777"></div>
<div class="lanes" style="left:176px;top:44px;width:288px;height:184px"></div>
<div style="left:176px;top:45px;width:112px;height:29px;background:#22eef0;border:1px solid #1a9aa0"></div>
<div style="left:335px;top:45px;width:129px;height:29px;background:#22eef0;border:1px solid #1a9aa0"></div>
<div style="left:178px;top:58px;width:108px;height:3px;background:repeating-linear-gradient(90deg,#111 0 2px,#0000 2px 5px)"></div><div style="left:337px;top:58px;width:125px;height:3px;background:repeating-linear-gradient(90deg,#111 0 2px,#0000 2px 5px)"></div>
<div class="teal" style="left:176px;top:75px;width:288px;height:31px"></div>
<div style="left:177px;top:83px;width:286px;height:6px;background:repeating-linear-gradient(90deg,#111 0 1px,#0000 1px 3px,#111 3px 4px,#0000 4px 9px)"></div><div style="left:177px;top:96px;width:286px;height:6px;background:repeating-linear-gradient(90deg,#111 0 1px,#0000 1px 3px,#111 3px 4px,#0000 4px 9px)"></div>
<div style="left:177px;top:85px;width:286px;height:1px;background:#222"></div><div style="left:177px;top:98px;width:286px;height:1px;background:#222"></div>
<div class="c" style="left:176px;top:106px;width:288px;background:#f4f07a"></div>
<div class="c" style="left:176px;top:113px;width:288px;background:#b08040"></div>
<div class="c" style="left:176px;top:119px;width:288px;background:#22eef0"></div>
<div class="c" style="left:176px;top:126px;width:288px;background:#22eef0"></div>
<div class="c" style="left:176px;top:132px;width:288px;background:#22eef0"></div>
<div class="c" style="left:176px;top:139px;width:288px;background:#f4f07a"></div>
<div class="c" style="left:176px;top:145px;width:288px;background:#f4f07a"></div>
<div class="c" style="left:176px;top:152px;width:288px;background:#b08040"></div>
<div class="c" style="left:176px;top:158px;width:288px;background:#22eef0"></div>
<div style="left:176px;top:165px;width:288px;height:62px;background:#9c9c9c"></div>
<div style="left:351px;top:44px;width:1px;height:200px;background:#444"></div>
<div class="lbl" style="left:298px;top:197px">Drop Files and Devices Here</div>
<div style="left:176px;top:228px;width:288px;height:20px;background:repeating-linear-gradient(#9c9c9c 0 6px,#7a7a7a 6px 6.6px)"></div>
<div style="left:464px;top:44px;width:33px;height:200px;background:#9a9a9a"></div>
<div style="left:464px;top:44px;width:33px;height:62px;background:#3ad0a0"></div>
<div style="left:464px;top:106px;width:33px;height:59px;background:linear-gradient(#f4f07a 0 6.5px,#c89050 6.5px 13px,#40e8f0 13px 32.5px,#f4f07a 32.5px 45.5px,#b08040 45.5px 52px,#f08898 52px)"></div>
<div style="left:464px;top:106px;width:33px;height:59px;background:repeating-linear-gradient(#0000 0 6px,#555 6px 6.5px)"></div>
<div style="left:464px;top:228px;width:33px;height:19px;background:repeating-linear-gradient(#40e040 0 5.6px,#666 5.6px 6.4px)"></div>
<div style="left:497px;top:44px;width:66px;height:204px;background:#9a9a9a"></div>
<div style="left:525px;top:106px;width:13px;height:59px;background:repeating-linear-gradient(#f0a848 0 5px,#0000 5px 6.5px)"></div>
<div style="left:525px;top:228px;width:13px;height:19px;background:repeating-linear-gradient(#f0a848 0 5px,#0000 5px 6.5px)"></div>
<div style="left:540px;top:106px;width:18px;height:59px;background:repeating-linear-gradient(#c8c8c8 0 5px,#0000 5px 6.5px)"></div>
<div style="left:564px;top:222px;width:5px;height:28px;background:radial-gradient(circle,#e8a030 1.6px,#0000 2px) 0 0/5px 6.5px"></div>
<div class="det" style="left:3px;top:258px;width:68px;height:65px"><div class="dh" style="left:0;top:0;width:66px"></div><div class="txt" style="left:3px;top:6px;width:55px;height:20px"></div><div class="txt" style="left:3px;top:31px;width:50px;height:12px"></div></div>
<div class="dev" style="left:79px;top:258px;width:83px;height:65px"><div class="dh" style="left:0;top:0;width:81px;background:#c0c0c0"></div><div class="scr" style="left:30px;top:12px;width:48px;height:44px"></div></div>
<div class="dev" style="left:164px;top:258px;width:54px;height:65px"><div class="dh" style="left:0;top:0;width:52px;background:#c0c0c0"></div><div class="scr" style="left:2px;top:12px;width:48px;height:44px"></div></div>
<div class="dev" style="left:220px;top:258px;width:140px;height:65px"><div class="dh" style="left:0;top:0;width:138px;background:#cfcfe0"></div><div style="left:3px;top:8px;width:14px;height:4px;background:#f0a040"></div><div style="left:34px;top:8px;width:14px;height:4px;background:#f0a040"></div><div class="scr" style="left:75px;top:7px;width:45px;height:50px"><div style="left:4px;top:33px;width:4px;height:15px;background:#40d060"></div><div style="left:34px;top:31px;width:4px;height:17px;background:#40d060"></div></div><div style="left:123px;top:25px;width:12px;height:4px;background:#f0a040"></div></div>
<div class="det" style="left:364px;top:258px;width:207px;height:65px"><div class="lbl" style="left:70px;top:30px">Drop Audio Effects Here</div></div>
<div class="stat"></div><div class="sbar" style="width:440px"></div><div class="sbr" style="left:458px;width:70px;background:#a0a0a0"></div><div class="sbr" style="left:535px;width:30px;background:#999"></div>
<div class="cam" style="left:473px;top:10px"><div style="left:33px;top:0;width:40px;height:40px;background:#e6e2de;border:2px solid #d0cac6"></div><div style="left:72px;top:0;width:6px;height:58px;background:#3a3436"></div><div style="left:78px;top:0;width:22px;height:58px;background:#a88c94"></div><div style="left:90px;top:0;width:4px;height:58px;background:#c6b0b6"></div><div style="left:8px;top:22px;width:1px;height:36px;background:#333"></div><div style="left:18px;top:30px;width:22px;height:28px;background:#2e2e30;border-radius:4px 4px 0 0"></div><div style="left:26px;top:37px;width:36px;height:22px;background:#1a1a1c;border-radius:10px 10px 0 0"></div><div style="left:42px;top:17px;width:13px;height:18px;background:#c8957c;border-radius:5px"></div><div style="left:41px;top:15px;width:15px;height:6px;background:#1a1a1a;border-radius:6px 6px 0 0"></div><div style="left:59px;top:50px;width:10px;height:8px;background:#c8957c"></div><div style="left:0;top:54px;width:100px;height:4px;background:#9a9a9a"></div></div>
</div>

<!-- ========== PANEL 8 ========== -->
<div class="p" style="left:613px;top:674px">
<div class="tt"></div><div class="l1"></div><div class="l2"></div><div class="l3"></div>
<div class="tool"></div><div class="tb1"></div><div class="tb2"></div><div class="play"></div><div class="tb3"></div><div class="tb4"></div>
<div class="srch"></div>
<div class="cats" style="height:221px"><div class="od" style="left:3px;top:7px"></div><div class="gd" style="left:3px;top:14px"></div>
<div class="txt" style="left:6px;top:2px;width:30px;height:20px"></div><div class="txt" style="left:6px;top:27px;width:30px;height:62px"></div>
<div class="sel" style="left:0;top:75px;width:70px;height:6px"></div><div class="txt" style="left:6px;top:97px;width:40px;height:52px"></div></div>
<div class="files" style="height:221px"><div class="txt" style="left:4px;top:2px;width:30px;height:40px"></div><div class="txt" style="left:22px;top:43px;width:45px;height:176px"></div></div>
<div class="main" style="left:174px;top:18px;width:400px;height:234px"></div>
<div style="left:176px;top:20px;width:288px;height:6px;background:linear-gradient(90deg,#5ab8a8 0 60%,#a0c890 60% 80%,#a0a0a0 80%)"></div>
<div style="left:176px;top:27px;width:288px;height:17px;background:#a9a9a9;border-bottom:1px solid #777"></div>
<div class="lanes" style="left:176px;top:44px;width:288px;height:184px"></div>
<div style="left:176px;top:48px;width:64px;height:29px;background:#6ad8d0"></div><div style="left:245px;top:48px;width:25px;height:29px;background:#6ad8d0"></div><div style="left:280px;top:48px;width:12px;height:29px;background:#6ad8d0"></div><div style="left:293px;top:48px;width:32px;height:29px;background:#6ad8d0"></div><div style="left:335px;top:48px;width:23px;height:29px;background:#6ad8d0"></div>
<div style="left:176px;top:48px;width:182px;height:4px;background:linear-gradient(90deg,#22eef0 0 64px,#0000 64px 69px,#22eef0 69px 94px,#0000 94px 104px,#22eef0 104px 149px,#0000 149px 159px,#22eef0 159px)"></div>
<div style="left:177px;top:60px;width:180px;height:4px;background:repeating-linear-gradient(90deg,#1a4a48 0 2px,#0000 2px 4px)"></div>
<div class="teal" style="left:176px;top:79px;width:269px;height:30px"></div>
<div style="left:177px;top:86px;width:266px;height:7px;background:repeating-linear-gradient(90deg,#1a1a1a 0 2px,#3a3a3a 2px 3px,#222 3px 4px)"></div>
<div style="left:177px;top:99px;width:266px;height:7px;background:repeating-linear-gradient(90deg,#1a1a1a 0 2px,#3a3a3a 2px 3px,#222 3px 4px)"></div>
<div style="left:445px;top:79px;width:18px;height:30px;background:#b4b4b4"></div>
<div style="left:210px;top:110px;width:117px;height:28px;background:#e0e098;border:1px solid #b0b050"></div>
<div style="left:212px;top:122px;width:113px;height:4px;background:repeating-linear-gradient(90deg,#222 0 3px,#0000 3px 8px)"></div><div style="left:212px;top:131px;width:113px;height:4px;background:repeating-linear-gradient(90deg,#222 0 4px,#0000 4px 6px)"></div>
<div class="c" style="left:193px;top:140px;width:177px;background:#e8a048"></div>
<div class="c" style="left:176px;top:147px;width:194px;background:#22eef0"></div>
<div class="c" style="left:176px;top:153px;width:194px;background:#22eef0"></div>
<div class="c" style="left:176px;top:159px;width:194px;background:#22eef0"></div>
<div class="c" style="left:193px;top:166px;width:179px;background:#f4f07a"></div>
<div class="c" style="left:210px;top:172px;width:162px;background:#f4f07a"></div>
<div class="c" style="left:285px;top:179px;width:93px;background:#b07848"></div>
<div class="c" style="left:176px;top:185px;width:90px;background:#22eef0"></div>
<div style="left:176px;top:192px;width:288px;height:36px;background:#9c9c9c"></div>
<div style="left:285px;top:44px;width:1px;height:200px;background:#555"></div>
<div style="left:280px;top:100px;width:184px;height:1px;background:#e03030"></div>
<div class="lbl" style="left:300px;top:210px">Drop Files and Devices Here</div>
<div style="left:176px;top:228px;width:288px;height:20px;background:repeating-linear-gradient(#9c9c9c 0 6px,#7a7a7a 6px 6.6px)"></div>
<div style="left:464px;top:44px;width:33px;height:200px;background:#9a9a9a"></div>
<div style="left:464px;top:78px;width:33px;height:30px;background:#3ad0a0"></div>
<div style="left:464px;top:108px;width:33px;height:30px;background:#f4f07a"></div>
<div style="left:464px;top:138px;width:33px;height:52px;background:linear-gradient(#e8a048 0 6.5px,#40e8f0 6.5px 26px,#f4f07a 26px 39px,#b08040 39px 45.5px,#f08898 45.5px)"></div>
<div style="left:464px;top:138px;width:33px;height:52px;background:repeating-linear-gradient(#0000 0 6px,#555 6px 6.5px)"></div>
<div style="left:464px;top:228px;width:33px;height:19px;background:repeating-linear-gradient(#40e040 0 5.6px,#666 5.6px 6.4px)"></div>
<div style="left:497px;top:44px;width:66px;height:204px;background:#9a9a9a"></div>
<div style="left:525px;top:78px;width:13px;height:112px;background:repeating-linear-gradient(#f0a848 0 5px,#0000 5px 6.5px)"></div>
<div style="left:525px;top:228px;width:13px;height:19px;background:repeating-linear-gradient(#f0a848 0 5px,#0000 5px 6.5px)"></div>
<div style="left:564px;top:222px;width:5px;height:28px;background:radial-gradient(circle,#e8a030 1.6px,#0000 2px) 0 0/5px 6.5px"></div>
<div class="det" style="left:3px;top:258px;width:68px;height:65px"><div class="dh" style="left:0;top:0;width:66px"></div></div>
<div class="dev" style="left:79px;top:258px;width:113px;height:65px"><div class="dh" style="left:0;top:0;width:111px;background:#c0c0c0"></div><div class="scr" style="left:30px;top:12px;width:48px;height:44px"></div></div>
<div class="dev" style="left:195px;top:258px;width:52px;height:65px"><div class="dh" style="left:0;top:0;width:50px;background:#c0c0c0"></div><div class="scr" style="left:2px;top:12px;width:47px;height:44px"></div></div>
<div class="dev" style="left:250px;top:258px;width:142px;height:65px"><div class="dh" style="left:0;top:0;width:140px;background:#cfcfcf"></div><div style="left:3px;top:8px;width:14px;height:4px;background:#f0a040"></div><div style="left:34px;top:8px;width:14px;height:4px;background:#f0a040"></div><div class="scr" style="left:78px;top:7px;width:44px;height:50px"></div><div style="left:125px;top:25px;width:12px;height:4px;background:#f0a040"></div></div>
<div class="dev" style="left:395px;top:258px;width:51px;height:65px"><div class="dh" style="left:0;top:0;width:49px;background:#c0c0c0"></div><div class="scr" style="left:2px;top:12px;width:47px;height:44px"></div></div>
<div class="det" style="left:450px;top:258px;width:121px;height:65px"><div class="lbl" style="left:30px;top:30px">Drop Audio Effects Here</div></div>
<div class="stat"></div><div class="sbar" style="width:430px"></div><div class="sbr" style="left:448px;width:70px;background:#a0a0a0"></div><div class="sbr" style="left:524px;width:42px;background:#999"></div>
<div class="cam" style="left:473px;top:10px"><div style="left:33px;top:0;width:40px;height:40px;background:#e6e2de;border:2px solid #d0cac6"></div><div style="left:72px;top:0;width:6px;height:58px;background:#3a3436"></div><div style="left:78px;top:0;width:22px;height:58px;background:#a88c94"></div><div style="left:90px;top:0;width:4px;height:58px;background:#c6b0b6"></div><div style="left:8px;top:22px;width:1px;height:36px;background:#333"></div><div style="left:18px;top:30px;width:22px;height:28px;background:#2e2e30;border-radius:4px 4px 0 0"></div><div style="left:26px;top:37px;width:36px;height:22px;background:#1a1a1c;border-radius:10px 10px 0 0"></div><div style="left:42px;top:17px;width:13px;height:18px;background:#c8957c;border-radius:5px"></div><div style="left:41px;top:15px;width:15px;height:6px;background:#1a1a1a;border-radius:6px 6px 0 0"></div><div style="left:44px;top:36px;width:12px;height:8px;background:#c8957c;border-radius:3px"></div><div style="left:0;top:54px;width:100px;height:4px;background:#9a9a9a"></div></div>
</div>

<!-- ========== PANEL 9 ========== -->
<div class="p" style="left:1213px;top:674px">
<div class="tt"></div><div class="l1"></div><div class="l2"></div><div class="l3"></div>
<div class="tool"></div><div class="tb1"></div><div class="tb2"></div><div class="play"></div><div class="tb3"></div><div class="tb4"></div>
<div class="srch"></div>
<div class="cats" style="height:221px"><div class="od" style="left:3px;top:40px"></div><div class="gd" style="left:3px;top:46px"></div><div class="txt" style="left:6px;top:52px;width:30px;height:60px"></div>
<div class="sel" style="left:0;top:78px;width:70px;height:5px;background:#e0b060"></div><div class="txt" style="left:6px;top:110px;width:40px;height:52px"></div></div>
<div class="files" style="height:221px"></div>
<div class="main" style="left:174px;top:18px;width:400px;height:234px"></div>
<div class="lanes" style="left:176px;top:44px;width:288px;height:184px"></div>
<div style="left:176px;top:20px;width:288px;height:6px;background:linear-gradient(90deg,#a0a0a0 0 55%,#5ab8a8 55% 85%,#a0a0a0 85%)"></div>
<div style="left:326px;top:46px;width:34px;height:5px;background:#22eef0"></div>
<div style="left:326px;top:53px;width:20px;height:5px;background:#22eef0"></div>
<div class="teal" style="left:326px;top:59px;width:106px;height:30px"></div>
<div class="teal" style="left:326px;top:90px;width:106px;height:30px"></div>
<div style="left:432px;top:90px;width:30px;height:30px;background:#b4b4b4"></div>
<div class="wv" style="left:327px;top:64px;width:104px;height:20px;clip-path:polygon(0 20%,10% 5%,20% 25%,30% 0,45% 20%,60% 5%,75% 22%,90% 2%,100% 15%,100% 85%,90% 98%,75% 78%,60% 95%,45% 80%,30% 100%,20% 75%,10% 95%,0 80%)"></div>
<div class="wv" style="left:327px;top:95px;width:104px;height:20px;clip-path:polygon(0 20%,10% 5%,20% 25%,30% 0,45% 20%,60% 5%,75% 22%,90% 2%,100% 15%,100% 85%,90% 98%,75% 78%,60% 95%,45% 80%,30% 100%,20% 75%,10% 95%,0 80%)"></div>
<div class="c" style="left:326px;top:128px;width:34px;background:#e8a048"></div>
<div class="c" style="left:326px;top:134px;width:34px;background:#22eef0"></div><div class="c" style="left:326px;top:141px;width:34px;background:#22eef0"></div><div class="c" style="left:326px;top:147px;width:34px;background:#22eef0"></div>
<div class="c" style="left:326px;top:154px;width:36px;background:#f4f07a"></div><div class="c" style="left:326px;top:160px;width:36px;background:#f4f07a"></div>
<div class="c" style="left:326px;top:167px;width:42px;background:#b07848"></div>
<div style="left:344px;top:44px;width:1px;height:200px;background:#555"></div>
<div class="lbl" style="left:300px;top:206px">Drop Files and Devices Here</div>
<div style="left:176px;top:228px;width:288px;height:20px;background:repeating-linear-gradient(#9c9c9c 0 6px,#7a7a7a 6px 6.6px)"></div>
<div style="left:464px;top:44px;width:33px;height:200px;background:#9a9a9a"></div>
<div style="left:464px;top:44px;width:33px;height:79px;background:#22cfa6"></div>
<div style="left:464px;top:123px;width:33px;height:59px;background:linear-gradient(#f4f07a 0 6.5px,#e8a048 6.5px 13px,#40e8f0 13px 32.5px,#f4f07a 32.5px 45.5px,#b08040 45.5px 52px,#f08898 52px)"></div>
<div style="left:464px;top:123px;width:33px;height:59px;background:repeating-linear-gradient(#0000 0 6px,#555 6px 6.5px)"></div>
<div style="left:464px;top:228px;width:33px;height:19px;background:repeating-linear-gradient(#40e040 0 5.6px,#666 5.6px 6.4px)"></div>
<div style="left:497px;top:44px;width:66px;height:204px;background:#9a9a9a"></div>
<div style="left:525px;top:123px;width:13px;height:59px;background:repeating-linear-gradient(#c8c8c8 0 5px,#0000 5px 6.5px)"></div>
<div style="left:525px;top:228px;width:13px;height:19px;background:repeating-linear-gradient(#f0a848 0 5px,#0000 5px 6.5px)"></div>
<div style="left:551px;top:175px;width:7px;height:5px;background:#d02040"></div>
<div style="left:564px;top:222px;width:5px;height:28px;background:radial-gradient(circle,#e8a030 1.6px,#0000 2px) 0 0/5px 6.5px"></div>
<!-- plugin overlay -->
<div style="left:23px;top:4px;width:303px;height:189px;background:#141414;border:1px solid #000"></div>
<div style="left:24px;top:5px;width:103px;height:187px;background:repeating-linear-gradient(#1e1e1e 0 21.5px,#0c0c0c 21.5px 22.8px)"></div>
<div class="dk" style="left:35px;top:14px">START HERE</div>
<div class="dk" style="left:35px;top:37px">STRETCH &amp; SHEAR</div>
<div class="dk" style="left:35px;top:60px">PITCH</div>
<div class="dk" style="left:35px;top:82px">DRUMS</div>
<div class="dk" style="left:35px;top:105px">VOCALS</div>
<div class="dk" style="left:35px;top:127px">GUITAR &amp; KEYS</div>
<div class="dk" style="left:35px;top:150px">DELAY</div>
<div class="dk" style="left:35px;top:172px">GLITCHY</div>
<div style="left:117px;top:10px;width:4px;height:180px;background:repeating-linear-gradient(#0000 0 7px,#bbb 7px 9px,#0000 9px 22.8px)"></div>
<div style="left:127px;top:5px;width:2px;height:187px;background:#444"></div>
<div style="left:129px;top:5px;width:121px;height:187px;background:#151515"></div>
<div style="left:136px;top:17px;width:100px;height:5px;background:#e8e8e8"></div>
<div style="left:145px;top:25px;width:50px;height:160px;background:repeating-linear-gradient(#0000 0 1px,#8a8a8a 1px 2.5px,#0000 2.5px 7.3px)"></div>
<div style="left:137px;top:25px;width:3px;height:160px;background:repeating-linear-gradient(#0000 0 1px,#555 1px 2.5px,#0000 2.5px 7.3px)"></div>
<div style="left:251px;top:5px;width:75px;height:187px;background:#2a2e31"></div>
<div style="left:276px;top:28px;width:24px;height:24px;border-radius:50%;border:2px solid #8a5ad0;background:radial-gradient(circle,#6a6a6a 0 6px,#2a2e31 7px)"></div>
<div style="left:276px;top:74px;width:24px;height:24px;border-radius:50%;border:2px solid #4ad0b0;background:radial-gradient(circle,#6a6a6a 0 6px,#2a2e31 7px)"></div>
<div style="left:281px;top:57px;font-size:3px;color:#8a6ad8;letter-spacing:.6px">STRETCH</div>
<div style="left:283px;top:104px;font-size:3px;color:#4ad0b0;letter-spacing:.6px">OFFSET</div>
<div style="left:258px;top:134px;width:62px;height:14px;background:#1a1a1a;border:1px solid #3a3a3a"></div>
<div style="left:308px;top:170px;width:3px;height:14px;background:#aaa"></div><div style="left:314px;top:170px;width:3px;height:14px;background:#aaa"></div>
<div class="det" style="left:4px;top:262px;width:66px;height:62px"><div class="dh" style="left:0;top:0;width:64px"></div><div class="txt" style="left:3px;top:6px;width:55px;height:12px"></div><div class="txt" style="left:3px;top:22px;width:50px;height:18px"></div></div>
<div class="dev" style="left:75px;top:262px;width:40px;height:62px"><div class="dh" style="left:0;top:0;width:38px"></div><div style="left:2px;top:12px;width:8px;height:46px;background:#2a2a2a"></div></div>
<div class="dev" style="left:119px;top:262px;width:140px;height:62px"><div class="dh" style="left:0;top:0;width:138px;background:#cfcfcf"></div><div style="left:3px;top:8px;width:14px;height:4px;background:#f0a040"></div><div style="left:34px;top:8px;width:14px;height:4px;background:#f0a040"></div><div class="scr" style="left:78px;top:7px;width:44px;height:50px"><div style="left:3px;top:28px;width:4px;height:18px;background:#40d060"></div><div style="left:34px;top:24px;width:4px;height:22px;background:#40d060"></div></div></div>
<div class="dev" style="left:264px;top:262px;width:50px;height:62px"><div class="dh" style="left:0;top:0;width:48px;background:#c0c0c0"></div><div class="scr" style="left:1px;top:12px;width:47px;height:42px"></div></div>
<div class="det" style="left:318px;top:262px;width:253px;height:62px"><div class="lbl" style="left:100px;top:30px">Drop Audio Effects Here</div></div>
<div class="stat"></div><div class="sbar" style="width:423px"></div><div class="sbr" style="left:441px;width:70px;background:#a0a0a0"></div><div class="sbr" style="left:517px;width:48px;background:#666"></div>
<div class="cam" style="left:473px;top:10px"><div style="left:33px;top:0;width:40px;height:40px;background:#e6e2de;border:2px solid #d0cac6"></div><div style="left:72px;top:0;width:6px;height:58px;background:#3a3436"></div><div style="left:78px;top:0;width:22px;height:58px;background:#a88c94"></div><div style="left:90px;top:0;width:4px;height:58px;background:#c6b0b6"></div><div style="left:8px;top:22px;width:1px;height:36px;background:#333"></div><div style="left:18px;top:30px;width:22px;height:28px;background:#2e2e30;border-radius:4px 4px 0 0"></div><div style="left:26px;top:37px;width:36px;height:22px;background:#1a1a1c;border-radius:10px 10px 0 0"></div><div style="left:42px;top:17px;width:13px;height:18px;background:#c8957c;border-radius:5px"></div><div style="left:41px;top:15px;width:15px;height:6px;background:#1a1a1a;border-radius:6px 6px 0 0"></div><div style="left:59px;top:50px;width:10px;height:8px;background:#c8957c"></div><div style="left:0;top:54px;width:100px;height:4px;background:#9a9a9a"></div></div>
</div>

</body></html>
